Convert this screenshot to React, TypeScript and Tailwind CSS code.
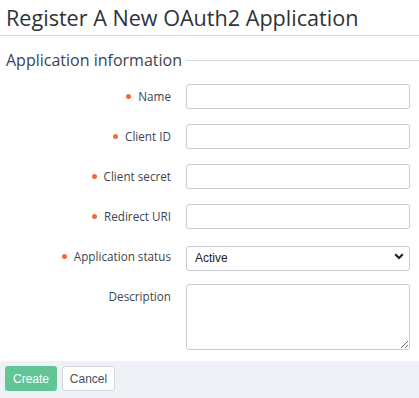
import React from "react";

const Label = ({ text, req }: { text: string; req?: boolean }) => (
  <div className="flex h-[25px] items-center justify-end text-[11.7px] text-[#3d4450]">
    {req && <span className="mr-[7px] inline-block h-[5px] w-[5px] rounded-full bg-[#f26a3d]" />}
    <span>{text}</span>
  </div>
);

const Input = () => (
  <input className="h-[25px] w-[224px] rounded-[3px] border border-[#c8ccd2] bg-white px-2 text-[12px] outline-none" />
);

export default function App() {
  return (
    <div className="min-h-[398px] bg-white" style={{ fontFamily: '"Open Sans", sans-serif' }}>
      <h1 className="px-[6px] pt-[1px] text-[21.6px] leading-[33px] text-[#2e3338]">Register A New OAuth2 Application</h1>
      <div className="mt-[1px] h-px bg-[#d6dce4]" />
      <div className="mt-[13px] flex items-center px-[6px]">
        <span className="text-[16px] leading-[22px] text-[#3d4450]">Application information</span>
        <div className="ml-[4px] mr-[-6px] h-px flex-1 bg-[#d6dce4]" />
      </div>
      <div className="mt-[13px] grid grid-cols-[171px_224px] gap-x-[15px] gap-y-[15px]">
        <Label text="Name" req />
        <Input />
        <Label text="Client ID" req />
        <Input />
        <Label text="Client secret" req />
        <Input />
        <Label text="Redirect URI" req />
        <Input />
        <Label text="Application status" req />
        <div className="relative h-[25px] w-[224px]">
          <select
            className="h-[25px] w-[224px] appearance-none rounded-[3px] border border-[#c8ccd2] bg-white pl-[8px] text-[12px] text-[#222] outline-none"
            style={{ fontFamily: '"Liberation Sans", Arial, sans-serif' }}
          >
            <option>Active</option>
          </select>
          <svg className="pointer-events-none absolute right-[6px] top-[9px]" width="10" height="7" viewBox="0 0 10 7">
            <path d="M1.2 1.2 L5 5 L8.8 1.2" fill="none" stroke="#222" strokeWidth="2.2" />
          </svg>
        </div>
        <div className="flex h-[25px] items-center justify-end text-[11.7px] text-[#3d4450]">Description</div>
        <textarea className="h-[66px] w-[224px] rounded-[3px] border border-[#c8ccd2] bg-white px-2 text-[12px] outline-none" />
      </div>
      <div
        className="mt-[11px] flex h-[37px] items-start gap-[5px] bg-[#eef2f6] px-[5px] pt-[5px]"
        style={{ fontFamily: '"Liberation Sans", Arial, sans-serif' }}
      >
        <button className="h-[25px] w-[52px] rounded-[3px] bg-[#62c594] text-[12px] text-white">Create</button>
        <button className="h-[25px] w-[53px] rounded-[3px] border border-[#d3d8de] bg-white text-[12px] text-[#4a4f57]">Cancel</button>
      </div>
    </div>
  );
}
